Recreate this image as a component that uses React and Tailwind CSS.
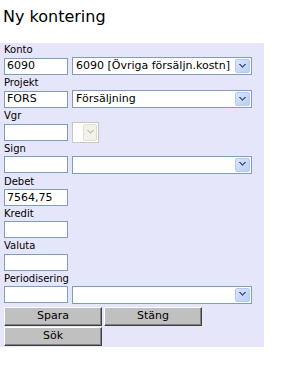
import React from "react";

function Arrow({ disabled }) {
  return (
    <div
      className={
        disabled
          ? "flex h-full w-[14px] items-center justify-center rounded-[2px] border border-[#e0ded5] bg-[#f2f1ea]"
          : "flex h-full w-[15px] items-center justify-center rounded-[2px] border border-[#b6c9f4] bg-[linear-gradient(135deg,#d9e5fd,#b8cdf8)]"
      }
    >
      <svg width="7" height="5" viewBox="0 0 7 5" shapeRendering="crispEdges">
        <path
          d="M0 0h2v1h1v1h1V1h1V0h2v1H6v1H5v1H4v1H3V3H2V2H1V1H0z"
          fill={disabled ? "#c9c7ba" : "#4d6185"}
        />
      </svg>
    </div>
  );
}

function Input({ value }) {
  return (
    <div className="flex h-[17px] w-[64px] items-center border border-[#7f9db9] bg-white px-[2px] text-[11px] leading-[14px] text-black">
      {value}
    </div>
  );
}

function Select({ value }) {
  return (
    <div className="flex h-[18px] w-[180px] items-center border border-[#7f9db9] bg-white p-[1px]">
      <div className="flex-1 overflow-hidden whitespace-nowrap pl-[2px] text-[11px] leading-[14px] text-black">{value}</div>
      <Arrow />
    </div>
  );
}

function Label({ children, first }) {
  return (
    <div
      className={
        (first ? "h-[14px] pt-[1px] " : "h-[15.25px] pt-[2px] ") +
        "text-[10px] leading-[12px] text-black"
      }
    >
      {children}
    </div>
  );
}

function Btn({ children }) {
  return (
    <div className="flex h-[19px] w-[98px] items-center justify-center border border-t-white border-l-white border-r-[#404040] border-b-[#404040] bg-[#c0c0c0] text-[11px] leading-[14px] text-black shadow-[inset_-1px_-1px_0_#808080]">
      {children}
    </div>
  );
}

export default function App() {
  return (
    <div className="w-[302px] h-[390px] bg-white font-['DejaVu_Sans',Verdana,sans-serif]">
      <div className="h-[43px] pl-[3px] pt-[7px] text-[16px] leading-[19px] text-black">Ny kontering</div>
      <div className="w-[264px] bg-[#e6e6fa] pl-[4px] pb-[1px]">
        <Label first>Konto</Label>
        <div className="flex items-center gap-[4px]">
          <Input value="6090" />
          <Select value="6090 [Övriga försäljn.kostn]" />
        </div>
        <Label>Projekt</Label>
        <div className="flex items-center gap-[4px]">
          <Input value="FORS" />
          <Select value="Försäljning" />
        </div>
        <Label>Vgr</Label>
        <div className="flex h-[17px] items-center gap-[4px]">
          <Input value="" />
          <div className="flex h-[21px] w-[27px] items-center border border-[#c9c7ba] bg-white p-[1px]">
            <div className="flex-1" />
            <Arrow disabled />
          </div>
        </div>
        <Label>Sign</Label>
        <div className="flex items-center gap-[4px]">
          <Input value="" />
          <Select value="" />
        </div>
        <Label>Debet</Label>
        <Input value="7564,75" />
        <Label>Kredit</Label>
        <Input value="" />
        <Label>Valuta</Label>
        <Input value="" />
        <Label>Periodisering</Label>
        <div className="flex items-center gap-[4px]">
          <Input value="" />
          <Select value="" />
        </div>
        <div className="mt-[3px] flex flex-col gap-[1px]">
          <div className="flex gap-[2px]">
            <Btn>Spara</Btn>
            <Btn>Stäng</Btn>
          </div>
          <div className="flex">
            <Btn>Sök</Btn>
          </div>
        </div>
      </div>
    </div>
  );
}
